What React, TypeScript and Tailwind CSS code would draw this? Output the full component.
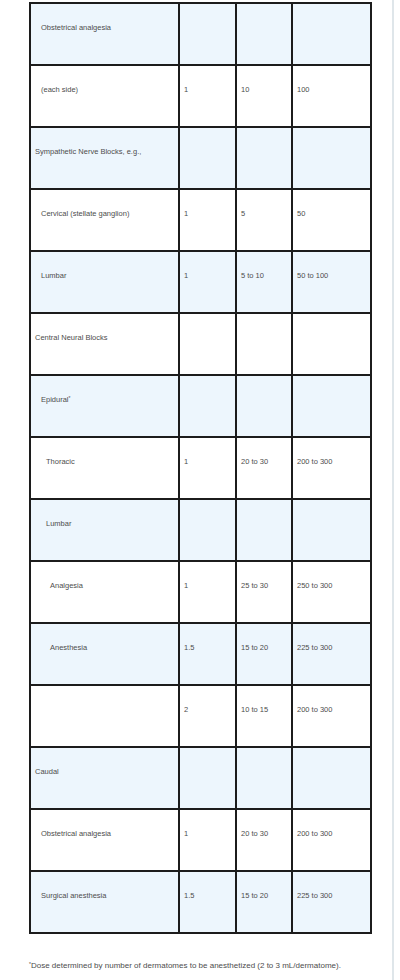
import React from "react";

type Row = { label: string; indent: number; sup?: boolean; a?: string; b?: string; c?: string };

const rows: Row[] = [
  { label: "Obstetrical analgesia", indent: 1 },
  { label: "(each side)", indent: 1, a: "1", b: "10", c: "100" },
  { label: "Sympathetic Nerve Blocks, e.g.,", indent: 0 },
  { label: "Cervical (stellate ganglion)", indent: 1, a: "1", b: "5", c: "50" },
  { label: "Lumbar", indent: 1, a: "1", b: "5 to 10", c: "50 to 100" },
  { label: "Central Neural Blocks", indent: 0 },
  { label: "Epidural", indent: 1, sup: true },
  { label: "Thoracic", indent: 2, a: "1", b: "20 to 30", c: "200 to 300" },
  { label: "Lumbar", indent: 2 },
  { label: "Analgesia", indent: 3, a: "1", b: "25 to 30", c: "250 to 300" },
  { label: "Anesthesia", indent: 3, a: "1.5", b: "15 to 20", c: "225 to 300" },
  { label: "", indent: 0, a: "2", b: "10 to 15", c: "200 to 300" },
  { label: "Caudal", indent: 0 },
  { label: "Obstetrical analgesia", indent: 1, a: "1", b: "20 to 30", c: "200 to 300" },
  { label: "Surgical anesthesia", indent: 1, a: "1.5", b: "15 to 20", c: "225 to 300" },
];

const indentClass = ["pl-[4px]", "pl-[10px]", "pl-[15px]", "pl-[19px]"];

export default function App() {
  return (
    <div
      className="flex w-[400px] h-[980px] bg-white overflow-hidden text-[#4d4d4d]"
      style={{ fontFamily: '"Liberation Sans", Arial, sans-serif' }}
    >
      <div className="w-[392px] shrink-0 flex flex-col pl-[29px] pt-[2px]">
        <div className="w-[343px] border-l-2 border-t-2 border-[#1c1c1c] flex flex-col">
          {rows.map((r, i) => (
            <div
              key={i}
              className={`grid grid-cols-[149px_57px_56px_79px] h-[62px] ${i % 2 === 0 ? "bg-[#edf6fd]" : "bg-white"}`}
            >
              <div className={`border-r-2 border-b-2 border-[#1c1c1c] pt-[19px] text-[7.5px] leading-[10px] whitespace-nowrap ${indentClass[r.indent]}`}>
                {r.label}
                {r.sup && <sup className="text-[5px]">*</sup>}
              </div>
              <div className="border-r-2 border-b-2 border-[#1c1c1c] pt-[19px] pl-[4px] text-[7.5px] leading-[10px]">{r.a}</div>
              <div className="border-r-2 border-b-2 border-[#1c1c1c] pt-[19px] pl-[4px] text-[7.5px] leading-[10px]">{r.b}</div>
              <div className="border-r-2 border-b-2 border-[#1c1c1c] pt-[19px] pl-[4px] text-[7.5px] leading-[10px]">{r.c}</div>
            </div>
          ))}
        </div>
        <p className="mt-[27px] text-[8px] leading-[10px] whitespace-nowrap">
          <sup className="text-[5px]">*</sup>Dose determined by number of dermatomes to be anesthetized (2 to 3 mL/dermatome).
        </p>
      </div>
      <div className="w-[2px] shrink-0 h-full bg-[#dfe6ea]" />
    </div>
  );
}
